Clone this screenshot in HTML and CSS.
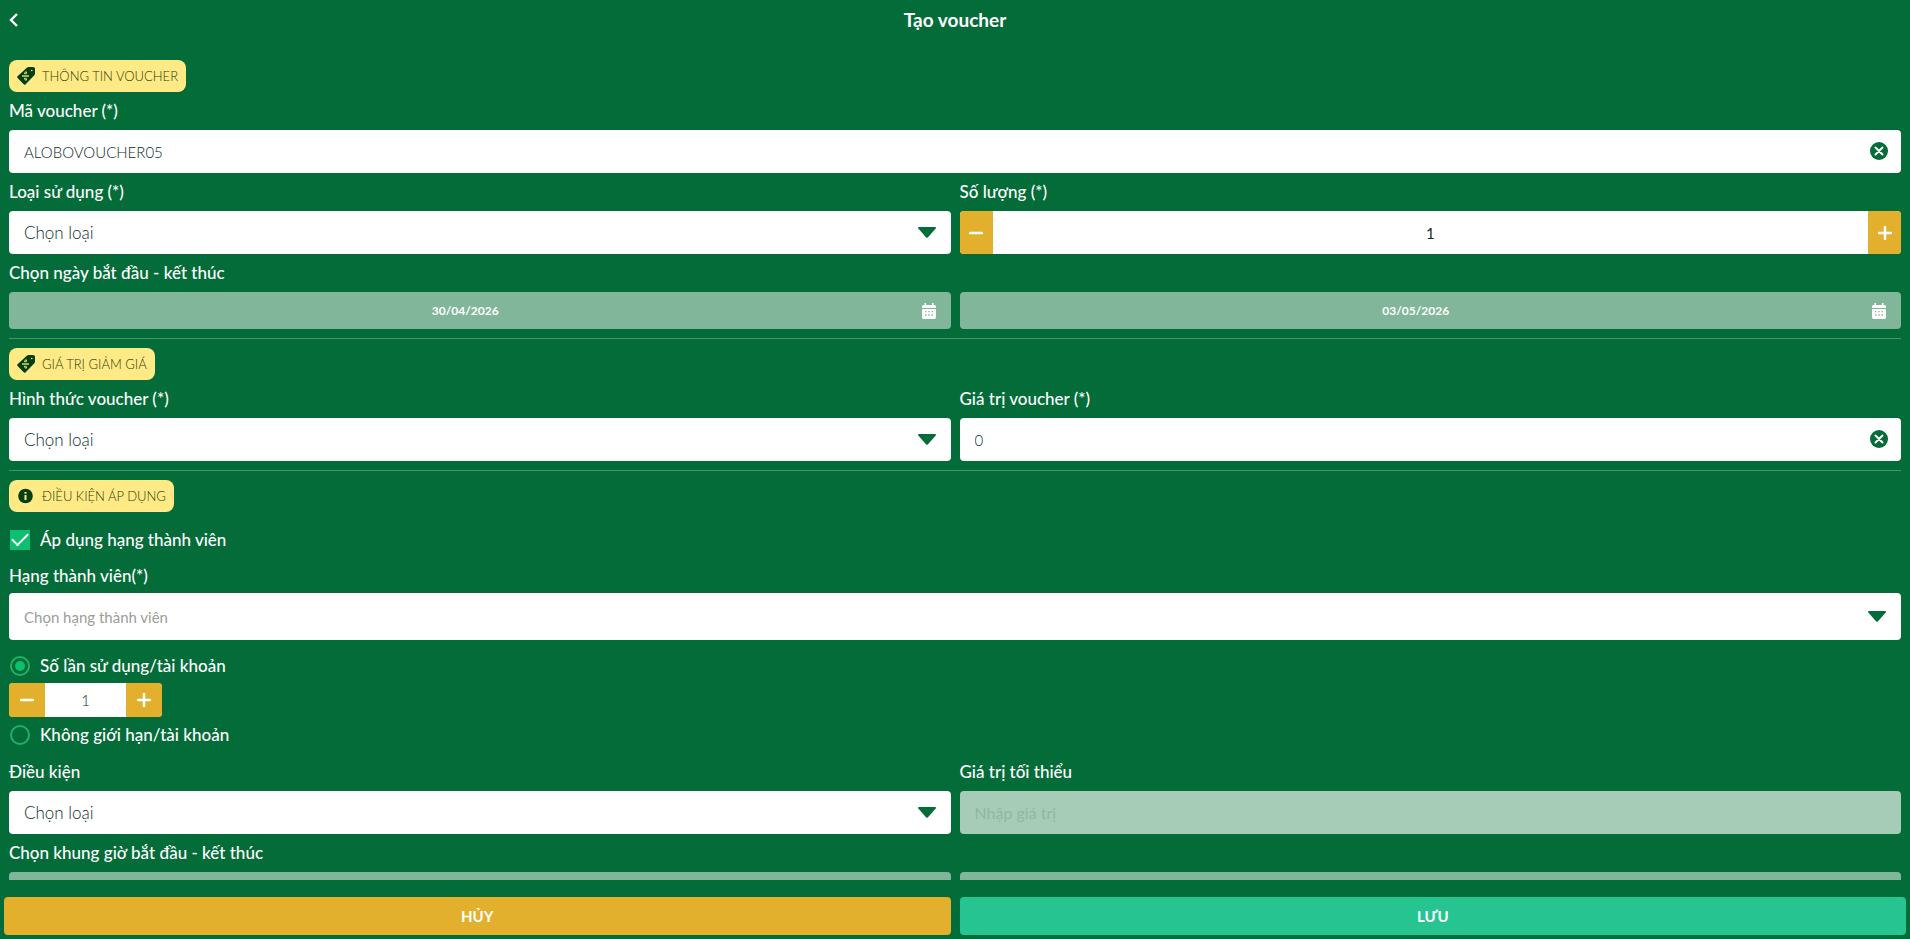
FILE: index.html
```html
<!DOCTYPE html>
<html lang="vi">
<head>
<meta charset="utf-8">
<meta name="viewport" content="width=device-width, initial-scale=1">
<title>Tạo voucher</title>
<link rel="stylesheet" href="styles.css">
</head>
<body>
<svg class="defs" aria-hidden="true">
  <symbol id="tag" viewBox="0 0 18 18">
    <path fill="#043f14" d="M11.500 0h4.700A1.800 1.800 0 0 1 18 1.800V6.500q0 1-.7 1.700l-8.600 9q-1 1-2 0L.8 11.300q-1.200-1.200 0-2.300L9.800.7Q10.500 0 11.500 0z"/>
    <circle cx="14.800" cy="3.500" r=".8" fill="#ffea85"/>
    <path d="M5 9h7" fill="none" stroke="#ffea85" stroke-width="1.300"/>
    <path d="M7.300 6.700l1.200-1.900h.9v1.900zM7.300 11.300h2.100v1.900h-1z" fill="none" stroke="#ffea85" stroke-width=".9"/>
  </symbol>
  <symbol id="info" viewBox="0 0 18 18">
    <circle cx="8.500" cy="9" r="7.300" fill="#043f14"/>
    <path d="M7.500 5h2v1.800h-2zM7.500 8h2v5h-2z" fill="#ffea85"/>
  </symbol>
  <symbol id="caret" viewBox="0 0 18 11">
    <path fill="#036c38" d="M1 0h16q1.500.4.700 1.600L10 10.300q-1 1-2 0L.3 1.600Q-.4.400 1 0z"/>
  </symbol>
  <symbol id="clear" viewBox="0 0 18 18">
    <circle cx="9" cy="9" r="9" fill="#036c38"/>
    <path d="M5.500 5.500l7 7m0-7l-7 7" stroke="#fff" stroke-width="2" stroke-linecap="round"/>
  </symbol>
  <symbol id="calendar" viewBox="0 0 14 16">
    <path fill="#fff" d="M2.500 0h1.500v2h6V0h1.500v2h1Q14 2 14 3.500V5H0V3.500Q0 2 1.500 2h1zM0 6h14v8.300q0 1.700-1.500 1.700h-11Q0 16 0 14.300z"/>
    <path d="M3 8.700h8M3 12h8" stroke="#81b69b" stroke-width="1.300" stroke-dasharray="1.400 1.900"/>
  </symbol>
  <symbol id="minus" viewBox="0 0 14 14">
    <path d="M1 7h12" stroke="#fff" stroke-width="2.500" stroke-linecap="round"/>
  </symbol>
  <symbol id="plus" viewBox="0 0 14 14">
    <path d="M1 7h12M7 1v12" stroke="#fff" stroke-width="2.500" stroke-linecap="round"/>
  </symbol>
</svg>

<header class="topbar">
  <button class="back" type="button" aria-label="Quay lại">
    <svg viewBox="0 0 10 14"><path d="M8 1L2 7l6 6" fill="none" stroke="#fff" stroke-width="2.400"/></svg>
  </button>
  <h1 class="title">Tạo voucher</h1>
</header>

<main class="content">
  <section class="section">
    <h2 class="badge"><svg class="badge-icon"><use href="#tag"/></svg>THÔNG TIN VOUCHER</h2>
    <div class="field">
      <label class="label" for="code">Mã voucher (*)</label>
      <div class="control">
        <input class="input" id="code" type="text" value="ALOBOVOUCHER05">
        <button class="clear" type="button" aria-label="Xóa mã"><svg><use href="#clear"/></svg></button>
      </div>
    </div>
    <div class="columns">
      <div class="field">
        <label class="label" for="usage">Loại sử dụng (*)</label>
        <div class="control">
          <select class="input select" id="usage"><option>Chọn loại</option></select>
          <svg class="caret"><use href="#caret"/></svg>
        </div>
      </div>
      <div class="field">
        <label class="label" for="quantity">Số lượng (*)</label>
        <div class="stepper">
          <button class="step" type="button" aria-label="Giảm số lượng"><svg><use href="#minus"/></svg></button>
          <input class="step-value" id="quantity" type="text" value="1">
          <button class="step" type="button" aria-label="Tăng số lượng"><svg><use href="#plus"/></svg></button>
        </div>
      </div>
    </div>
    <p class="label" id="dates">Chọn ngày bắt đầu - kết thúc</p>
    <div class="columns" role="group" aria-labelledby="dates">
      <button class="picker" type="button">30/04/2026<svg><use href="#calendar"/></svg></button>
      <button class="picker" type="button">03/05/2026<svg><use href="#calendar"/></svg></button>
    </div>
  </section>

  <section class="section">
    <h2 class="badge"><svg class="badge-icon"><use href="#tag"/></svg>GIÁ TRỊ GIẢM GIÁ</h2>
    <div class="columns">
      <div class="field">
        <label class="label" for="form">Hình thức voucher (*)</label>
        <div class="control">
          <select class="input select" id="form"><option>Chọn loại</option></select>
          <svg class="caret"><use href="#caret"/></svg>
        </div>
      </div>
      <div class="field">
        <label class="label" for="value">Giá trị voucher (*)</label>
        <div class="control">
          <input class="input" id="value" type="text" value="0">
          <button class="clear" type="button" aria-label="Xóa giá trị"><svg><use href="#clear"/></svg></button>
        </div>
      </div>
    </div>
  </section>

  <section class="section">
    <h2 class="badge"><svg class="badge-icon"><use href="#info"/></svg>ĐIỀU KIỆN ÁP DỤNG</h2>
    <label class="option option-check"><input class="check" type="checkbox" checked>Áp dụng hạng thành viên</label>
    <div class="field">
      <label class="label label-spaced" for="tier">Hạng thành viên(*)</label>
      <div class="control control-tall">
        <select class="input select select-empty" id="tier"><option>Chọn hạng thành viên</option></select>
        <svg class="caret"><use href="#caret"/></svg>
      </div>
    </div>
    <label class="option option-limit"><input class="radio" type="radio" name="limit" checked>Số lần sử dụng/tài khoản</label>
    <div class="stepper stepper-small">
      <button class="step" type="button" aria-label="Giảm số lần"><svg><use href="#minus"/></svg></button>
      <input class="step-value" type="text" value="1" aria-label="Số lần sử dụng">
      <button class="step" type="button" aria-label="Tăng số lần"><svg><use href="#plus"/></svg></button>
    </div>
    <label class="option"><input class="radio" type="radio" name="limit">Không giới hạn/tài khoản</label>
    <div class="columns">
      <div class="field">
        <label class="label" for="condition">Điều kiện</label>
        <div class="control">
          <select class="input select" id="condition"><option>Chọn loại</option></select>
          <svg class="caret"><use href="#caret"/></svg>
        </div>
      </div>
      <div class="field">
        <label class="label" for="minimum">Giá trị tối thiểu</label>
        <div class="control">
          <input class="input" id="minimum" type="text" placeholder="Nhập giá trị" disabled>
        </div>
      </div>
    </div>
    <p class="label" id="hours">Chọn khung giờ bắt đầu - kết thúc</p>
    <div class="columns" role="group" aria-labelledby="hours">
      <button class="picker" type="button" aria-label="Giờ bắt đầu"></button>
      <button class="picker" type="button" aria-label="Giờ kết thúc"></button>
    </div>
  </section>
</main>

<footer class="actions">
  <button class="action action-cancel" type="button">HỦY</button>
  <button class="action action-save" type="button">LƯU</button>
</footer>
</body>
</html>
```
FILE: styles.css
```css
* {
  box-sizing: border-box;
}

body {
  display: flex;
  flex-direction: column;
  height: 100vh;
  margin: 0;
  overflow: hidden;
  background: #036c38;
  color: #fff;
  font: 500 17px/20px Lato, sans-serif;
}

button,
input,
select {
  margin: 0;
  border: 0;
  padding: 0;
  font: inherit;
}

button {
  color: inherit;
  cursor: pointer;
}

svg {
  display: block;
}

.defs {
  position: absolute;
  width: 0;
  height: 0;
}

.topbar {
  display: grid;
  grid-template-columns: 32px 1fr 32px;
  align-items: center;
  flex: none;
  height: 40px;
}

.back {
  height: 40px;
  padding-left: 9px;
  background: none;
}

.back svg {
  width: 10px;
  height: 14px;
}

.title {
  margin: 0;
  font-size: 19px;
  font-weight: 700;
  text-align: center;
}

.content {
  flex: 1;
  min-height: 0;
  overflow: hidden;
  padding: 20px 9px 0;
}

.section + .section {
  margin-top: 9px;
  border-top: 1px solid #4a9460;
  padding-top: 9px;
}

.badge {
  display: flex;
  align-items: center;
  gap: 7px;
  width: fit-content;
  height: 32px;
  margin: 0;
  border-radius: 8px;
  padding: 0 8px;
  background: #ffea85;
  color: #1f3d0c;
  font-size: 13px;
  font-weight: 300;
}

.badge-icon {
  width: 18px;
  height: 18px;
}

.columns {
  display: grid;
  grid-template-columns: 1fr 1fr;
  gap: 9px;
}

.label {
  display: flex;
  align-items: center;
  height: 38px;
  margin: 0;
}

.label-spaced {
  padding-top: 4px;
}

.control {
  position: relative;
  height: 43px;
}

.control-tall {
  height: 47px;
}

.input {
  width: 100%;
  height: 100%;
  border-radius: 4px;
  padding: 0 40px 0 15px;
  background: #fff;
  color: #0c2c2c;
  font-size: 15px;
  font-weight: 300;
}

.input:disabled {
  background: #a6cbb7;
}

.input::placeholder {
  color: #94b5a3;
  font-size: 16px;
  font-weight: 400;
}

.select {
  appearance: none;
  font-size: 17px;
}

.select-empty {
  color: #9c9c9c;
  font-size: 15px;
  font-weight: 400;
}

.caret {
  position: absolute;
  top: 50%;
  right: 15px;
  width: 18px;
  height: 11px;
  margin-top: -6px;
  pointer-events: none;
}

.clear {
  position: absolute;
  top: 50%;
  right: 13px;
  width: 18px;
  height: 18px;
  margin-top: -10px;
  background: none;
}

.clear svg {
  width: 18px;
  height: 18px;
}

.stepper {
  display: flex;
  height: 43px;
  overflow: hidden;
  border-radius: 4px;
  background: #fff;
}

.step {
  display: flex;
  align-items: center;
  justify-content: center;
  flex: none;
  width: 33px;
  background: #e2b02c;
}

.step svg {
  width: 14px;
  height: 14px;
}

.step-value {
  flex: 1;
  min-width: 0;
  background: #fff;
  color: #0c2c2c;
  font-size: 15px;
  font-weight: 400;
  text-align: center;
}

.stepper-small {
  width: 153px;
  height: 34px;
}

.stepper-small .step {
  width: 36px;
}

.stepper-small .step-value {
  font-weight: 300;
}

.picker {
  position: relative;
  height: 37px;
  border-radius: 4px;
  padding-right: 29px;
  background: #81b69b;
  font-size: 12px;
  font-weight: 700;
}

.picker svg {
  position: absolute;
  top: 11px;
  right: 15px;
  width: 14px;
  height: 16px;
}

.option {
  display: flex;
  align-items: center;
  gap: 10px;
  width: fit-content;
  height: 36px;
  padding-left: 1px;
}

.option-check {
  height: 43px;
  padding-top: 12px;
}

.option-limit {
  height: 43px;
  padding-top: 9px;
}

.check,
.radio {
  appearance: none;
  width: 20px;
  height: 20px;
}

.check {
  display: grid;
  place-items: center;
  background: #0cc06f;
}

.check:checked::before {
  content: "";
  width: 14px;
  height: 7px;
  margin-bottom: 4px;
  border-bottom: 2px solid #fff;
  border-left: 2px solid #fff;
  rotate: -45deg;
}

.radio {
  border: 2px solid #1fb266;
  border-radius: 50%;
  padding: 3px;
}

.radio:checked {
  background: #0cc06f content-box;
}

.actions {
  display: grid;
  grid-template-columns: 1fr 1fr;
  gap: 9px;
  flex: none;
  padding: 17px 4px 4px;
}

.action {
  height: 38px;
  border-radius: 4px;
  font-size: 15px;
  font-weight: 700;
}

.action-cancel {
  background: #e2b02c;
}

.action-save {
  background: #25c491;
}
```
